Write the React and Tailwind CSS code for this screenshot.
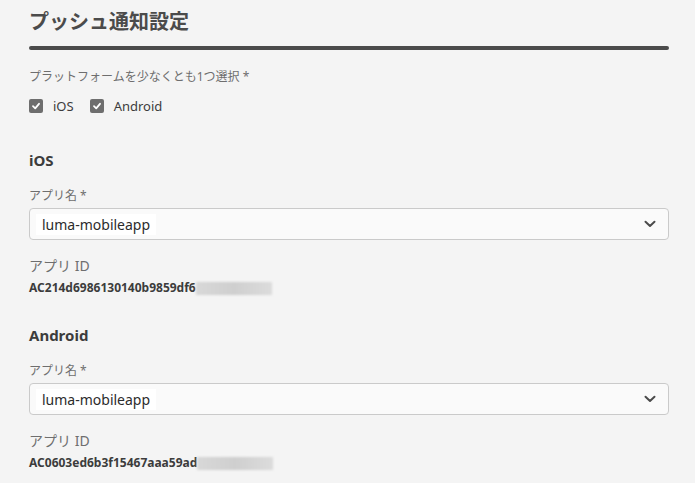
import React from 'react';

const font = { fontFamily: '"Noto Sans", "Noto Sans CJK JP", sans-serif' };

const Check = ({ label }) => (
  <label className="flex items-center gap-[10px]">
    <span className="flex h-[14px] w-[14px] items-center justify-center rounded-[2px] bg-[#6e6e6e]">
      <svg width="10" height="10" viewBox="0 0 10 10">
        <path d="M2 5.2 L4.2 7.3 L8 2.8" fill="none" stroke="#fff" strokeWidth="1.8" strokeLinecap="round" strokeLinejoin="round" />
      </svg>
    </span>
    <span className="text-[13px] leading-[16px] text-[#3c3c3c]">{label}</span>
  </label>
);

const AppSection = ({ title, appId, first }) => (
  <div className={first ? 'mt-[36px]' : 'mt-[28px]'}>
    <h2 className="text-[15px] font-bold leading-[20px] text-[#3c3c3c]">{title}</h2>
    <p className="mt-[18px] text-[12px] leading-[16px] text-[#6e6e6e]">アプリ名 *</p>
    <div className="mt-[4px] flex h-[32px] items-center justify-between rounded-[4px] border border-[#cacaca] bg-[#fafafa] pl-[6px] pr-[12px]">
      <span className="bg-white px-[6px] text-[14px] leading-[21px] text-[#2c2c2c]">luma-mobileapp</span>
      <svg width="12" height="8" viewBox="0 0 12 8">
        <path d="M1.5 1.8 L6 6 L10.5 1.8" fill="none" stroke="#4b4b4b" strokeWidth="2" strokeLinecap="round" strokeLinejoin="round" />
      </svg>
    </div>
    <p className="mt-[17px] text-[14px] leading-[18px] text-[#6e6e6e]">アプリ ID</p>
    <div className="mt-[4px] flex items-center">
      <span className="text-[12px] font-bold leading-[18px] text-[#3c3c3c]">{appId}</span>
      <span className="h-[13px] w-[76px] bg-gradient-to-r from-[#d8d8d8] via-[#cfcfcf] to-[#dcdcdc] blur-[1px]" />
    </div>
  </div>
);

export default function App() {
  return (
    <div className="min-h-screen bg-[#f4f4f4] pl-[29px] pr-[26px] pt-[8px]" style={font}>
      <h1 className="text-[20px] font-bold leading-[28px] text-[#4b4b4b]">プッシュ通知設定</h1>
      <div className="mt-[10px] h-[4px] rounded-full bg-[#4b4b4b]" />
      <p className="mt-[19px] text-[12px] leading-[16px] text-[#6e6e6e]">プラットフォームを少なくとも1つ選択 *</p>
      <div className="mt-[13px] flex items-center gap-[16px]">
        <Check label="iOS" />
        <Check label="Android" />
      </div>
      <AppSection title="iOS" appId="AC214d6986130140b9859df6" first />
      <AppSection title="Android" appId="AC0603ed6b3f15467aaa59ad" />
    </div>
  );
}
